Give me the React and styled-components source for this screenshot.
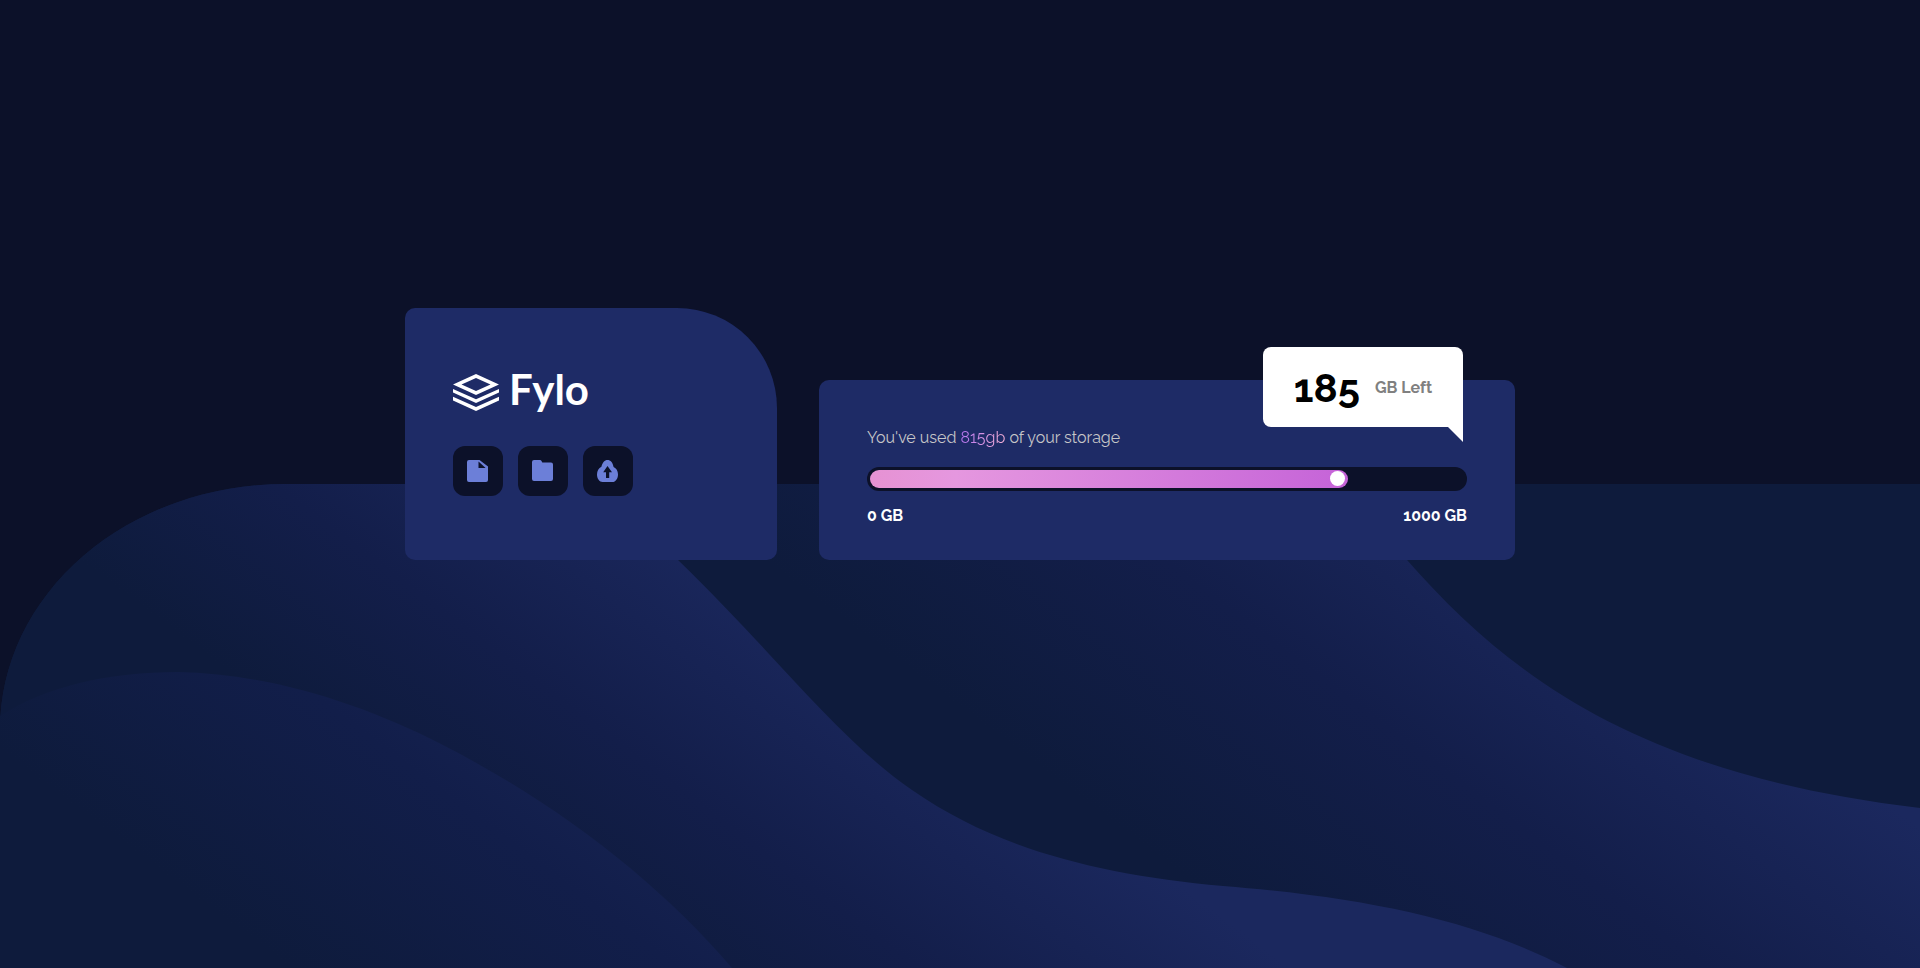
import React from 'react';
import styled, { createGlobalStyle } from 'styled-components';

const GlobalStyle = createGlobalStyle`
  *, *::before, *::after { box-sizing: border-box; }
  body {
    margin: 0;
    background: #0c1129;
    color: #fff;
    font-family: Raleway, Lato, "Liberation Sans", sans-serif;
    font-size: 16px;
    line-height: 20px;
  }
`;

const Page = styled.div`
  display: grid;
  grid-template-columns: 100%;
  min-height: 100vh;
`;

const Backdrop = styled.svg`
  grid-area: 1 / 1;
  align-self: end;
  display: block;
  width: 100%;
  height: 50vh;
`;

const Main = styled.main`
  grid-area: 1 / 1;
  z-index: 1;
  display: flex;
  align-items: center;
  justify-content: center;
  padding: 48px 24px 148px;
`;

const Cards = styled.div`
  display: grid;
  grid-template-columns: 372fr 696fr;
  align-items: end;
  gap: 42px;
  width: 100%;
  max-width: 1110px;

  @media (max-width: 900px) {
    grid-template-columns: 1fr;
  }
`;

const Card = styled.section`
  position: relative;
  border-radius: 10px;
  background: #1e2b66;
`;

const BrandCard = styled(Card)`
  padding: 60px 48px 64px;
  border-top-right-radius: 100px;
`;

const StorageCard = styled(Card)`
  padding: 48px 48px 34px;
`;

const Brand = styled.h1`
  display: flex;
  align-items: center;
  gap: 10px;
  height: 42px;
  margin: 0 0 36px;
  font-family: Lato, sans-serif;
  font-size: 42px;
  font-weight: 700;
  line-height: 40px;
`;

const LogoMark = styled.svg`
  width: 46px;
  height: 37px;
  margin-top: 6px;
`;

const Actions = styled.div`
  display: flex;
  gap: 15px;
`;

const IconButton = styled.button`
  display: grid;
  place-items: center;
  width: 50px;
  height: 50px;
  padding: 0;
  border: 0;
  border-radius: 12px;
  background: #0c1129;
  color: #6c7fd8;
  cursor: pointer;
`;

const Usage = styled.p`
  margin: 0 0 19px;
  color: #c6c6c8;
`;

const Used = styled.span`
  background: linear-gradient(to right, #b675f0, #f5b0d6);
  background-clip: text;
  color: transparent;
`;

const Track = styled.div`
  height: 24px;
  padding: 3px;
  border-radius: 12px;
  background: #0c1129;
`;

const Fill = styled.div`
  display: flex;
  align-items: flex-start;
  justify-content: flex-end;
  height: 18px;
  padding: 1px 3px;
  border-radius: 9px;
  background: linear-gradient(to right, #e692d3, #e597df 18%, #c563d8);
`;

const Knob = styled.span`
  width: 15px;
  height: 15px;
  border-radius: 50%;
  background: #fff;
`;

const Scale = styled.div`
  display: flex;
  justify-content: space-between;
  margin-top: 15px;
  font-weight: 700;
`;

const Remaining = styled.div`
  position: absolute;
  top: -33px;
  right: 52px;
  display: flex;
  align-items: center;
  justify-content: center;
  gap: 15px;
  width: 200px;
  height: 80px;
  padding-top: 2px;
  border-radius: 8px 8px 0 8px;
  background: #fff;
  color: #808080;
  font-weight: 700;

  &::after {
    content: "";
    position: absolute;
    top: 100%;
    right: 0;
    border-top: 15px solid #fff;
    border-left: 15px solid transparent;
  }
`;

const Amount = styled.strong`
  color: #000;
  font-size: 40px;
  font-weight: 700;
  line-height: 40px;
`;

const Waves = () => (
  <Backdrop viewBox="0 484 1920 484" preserveAspectRatio="none" aria-hidden="true">
    <defs>
      <linearGradient id="right" gradientUnits="userSpaceOnUse" x1="1098" y1="811" x2="1386" y2="427">
        <stop offset="0" stopColor="#0e1b3c" />
        <stop offset="0.5" stopColor="#131e4a" />
        <stop offset="1" stopColor="#1b285e" />
      </linearGradient>
      <linearGradient id="middle" gradientUnits="userSpaceOnUse" x1="455" y1="841" x2="695" y2="521">
        <stop offset="0" stopColor="#0e1b3c" />
        <stop offset="0.44" stopColor="#131e4a" />
        <stop offset="1" stopColor="#1b285e" />
      </linearGradient>
      <linearGradient id="left" gradientUnits="userSpaceOnUse" x1="256" y1="942" x2="496" y2="622">
        <stop offset="0" stopColor="#0e1b3c" />
        <stop offset="0.58" stopColor="#121e4a" />
        <stop offset="1" stopColor="#182556" />
      </linearGradient>
    </defs>
    <path fill="#0e1b3c" d="M0 729A285 245 0 0 1 285 484H1920V968H0Z" />
    <path
      fill="url(#right)"
      d="M600 484H1345C1366 508 1386 537 1407 560C1510 677 1640 775 1920 808V968H600Z"
    />
    <path
      fill="url(#middle)"
      d="M0 729A285 245 0 0 1 285 484H590C621 508 650 533 678 560C776 655 838 739 912 790C998 850 1102 875 1223 886C1370 898 1476 921 1567 968H0Z"
    />
    <path
      fill="url(#left)"
      d="M0 716C46 686 109 672 178 672C270 674 360 703 441 744C560 805 658 882 732 968H0Z"
    />
  </Backdrop>
);

const Logo = () => (
  <LogoMark viewBox="0 0 46 37" fill="#fff" aria-hidden="true">
    <path fillRule="evenodd" d="M23 0 46 10.5 23 21 0 10.5ZM23 4 8.5 10.5 23 17 37.500 10.5Z" />
    <path d="M0 15 23 25.200 46 15V18.600L23 29 0 18.600Z" />
    <path d="M0 22.800 23 33 46 22.800V26.400L23 37 0 26.400Z" />
  </LogoMark>
);

const DocumentIcon = () => (
  <svg width="22" height="22" viewBox="0 0 22 22" fill="currentColor" aria-hidden="true">
    <path
      fillRule="evenodd"
      d="M2 0H12.500L21 6.500V20A2 2 0 0 1 19 22H2A2 2 0 0 1 0 20V2A2 2 0 0 1 2 0ZM11.500 1.500V8H18.600Z"
    />
  </svg>
);

const FolderIcon = () => (
  <svg width="22" height="22" viewBox="0 0 22 22" fill="currentColor" aria-hidden="true">
    <path d="M2 0H8Q9 0 9.500 1L10.300 2.600H19A2 2 0 0 1 21 4.600V19A2 2 0 0 1 19 21H2A2 2 0 0 1 0 19V2A2 2 0 0 1 2 0Z" />
  </svg>
);

const UploadIcon = () => (
  <svg width="22" height="22" viewBox="0 0 22 22" fill="currentColor" aria-hidden="true">
    <path
      fillRule="evenodd"
      d="M10.500 0C13.500 0 15.800 2.500 16.600 7C19.300 8.200 21 11 21 14.200C21 18.800 18.500 22 15.500 22H5.500C2.500 22 0 18.800 0 14.500C0 11 1.700 8.200 4.400 6.800C5.500 2.500 7.600 0 10.500 0ZM10.500 6 6.200 12.300H9V18H12.200V12.300H15Z"
    />
  </svg>
);

const actions = [
  { label: 'Documents', Icon: DocumentIcon },
  { label: 'Folders', Icon: FolderIcon },
  { label: 'Upload', Icon: UploadIcon },
];

const storage = { used: 815, total: 1000, fill: 80.5 };

export default function App() {
  return (
    <>
      <GlobalStyle />
      <Page>
        <Waves />
        <Main>
          <Cards>
            <BrandCard>
              <Brand>
                <Logo />
                Fylo
              </Brand>
              <Actions>
                {actions.map(({ label, Icon }) => (
                  <IconButton key={label} type="button" aria-label={label}>
                    <Icon />
                  </IconButton>
                ))}
              </Actions>
            </BrandCard>
            <StorageCard>
              <Usage>
                You've used <Used>{storage.used}gb</Used> of your storage
              </Usage>
              <Track
                role="progressbar"
                aria-label="Storage used"
                aria-valuemin={0}
                aria-valuemax={storage.total}
                aria-valuenow={storage.used}
              >
                <Fill style={{ width: `${storage.fill}%` }}>
                  <Knob />
                </Fill>
              </Track>
              <Scale>
                <span>0 GB</span>
                <span>{storage.total} GB</span>
              </Scale>
              <Remaining>
                <Amount>{storage.total - storage.used}</Amount>
                <span>GB Left</span>
              </Remaining>
            </StorageCard>
          </Cards>
        </Main>
      </Page>
    </>
  );
}
